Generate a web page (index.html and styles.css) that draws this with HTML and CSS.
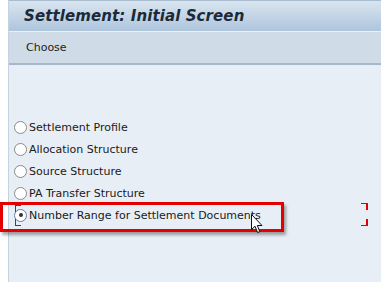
FILE: index.html
```html
<!DOCTYPE html>
<html>
<head>
<meta charset="utf-8">
<link rel="stylesheet" href="styles.css">
</head>
<body>
<div class="frame">
  <div class="main">
    <div class="titlebar"><span class="title">Settlement: Initial Screen</span></div>
    <div class="toolbar"><span class="tool">Choose</span></div>
    <div class="content">
      <label class="opt"><span class="radio"></span><span>Settlement Profile</span></label>
      <label class="opt"><span class="radio"></span><span>Allocation Structure</span></label>
      <label class="opt"><span class="radio"></span><span>Source Structure</span></label>
      <label class="opt"><span class="radio"></span><span>PA Transfer Structure</span></label>
      <label class="opt sel"><span class="radio on"></span><span>Number Range for Settlement Documents</span>
        <span class="highlight"></span>
        <span class="br tl"></span><span class="br bl"></span><span class="br tr"></span><span class="br brr"></span>
        <svg class="cursor" width="13" height="20" viewBox="0 0 13 20"><path d="M0.5 0.5 L0.5 15.5 L4 12.2 L6.6 18.5 L8.8 17.6 L6.3 11.5 L11 11.5 Z" fill="#fff" stroke="#111" stroke-width="1"/></svg>
      </label>
    </div>
  </div>
</div>
</body>
</html>
```

FILE: styles.css
```css
html, body { margin: 0; padding: 0; }
body { width: 381px; height: 282px; overflow: hidden; background: #fff; font-family: "DejaVu Sans", Verdana, sans-serif; }
.frame { display: flex; height: 282px; padding-left: 8px; }
.main { flex: 1; display: flex; flex-direction: column; border-left: 1px solid #c5d2df; background: #e8eef5; }
.titlebar { height: 30px; border-top: 1px solid #a8bccf; border-bottom: 1px solid #e9f0f6; background: linear-gradient(#d9e5f0, #aec5dc); display: flex; align-items: center; padding-left: 15px; }
.title { font-weight: bold; font-style: italic; font-size: 15px; color: #1c2a38; letter-spacing: 0.1px; }
.toolbar { height: 31px; background: #cfdce7; border-bottom: 2px solid #a6b9cc; display: flex; align-items: center; padding-left: 17px; }
.tool { font-size: 11px; color: #222; font-family: "DejaVu Sans", Verdana, sans-serif; }
.content { flex: 1; padding-top: 51px; padding-left: 5px; display: flex; flex-direction: column; }
.opt { position: relative; display: flex; align-items: center; height: 22px; font-size: 11px; color: #1a1a1a; }
.radio { width: 11px; height: 11px; border: 1px solid #8a8a8a; border-radius: 50%; background: #fff; margin-right: 2px; box-sizing: content-box; position: relative; }
.radio.on { border-color: #5a7fa8; }
.radio.on::after { content: ""; position: absolute; left: 3.5px; top: 3.5px; width: 4px; height: 4px; border-radius: 50%; background: #333; }
.highlight { position: absolute; left: -14px; top: -2px; width: 278px; height: 24px; border: 3px solid #e30000; box-shadow: 2px 3px 3px rgba(0,0,0,0.35); pointer-events: none; }
.br { position: absolute; width: 5px; height: 6px; border-color: #e30000; border-style: solid; border-width: 0; }
.tl { left: 1px; top: 1px; border-left-width: 1px; border-top-width: 1px; }
.bl { left: 1px; top: 15px; border-left-width: 1px; border-bottom-width: 1px; }
.tr { left: 347px; top: -1px; border-right-width: 2px; border-top-width: 1px; }
.brr { left: 347px; top: 15px; border-right-width: 2px; border-bottom-width: 1px; }
.cursor { position: absolute; left: 237px; top: 10px; }
```
